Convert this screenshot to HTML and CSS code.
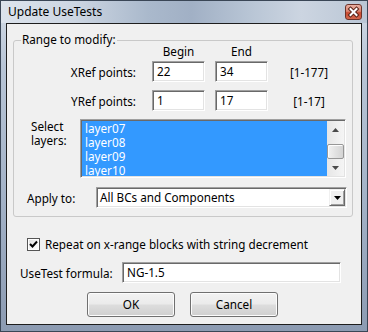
FILE: index.html
```html
<!DOCTYPE html>
<html>
<head>
<meta charset="utf-8">
<link rel="stylesheet" href="styles.css">
</head>
<body>
<div class="window">
  <div class="titlebar">
    <span class="title">Update UseTests</span>
    <div class="close">
      <svg width="15" height="14" viewBox="0 0 15 14">
        <path d="M4.5 4 L10.5 10 M10.5 4 L4.5 10" stroke="#5a2318" stroke-width="4" stroke-linecap="square"/>
        <path d="M4.5 4 L10.5 10 M10.5 4 L4.5 10" stroke="#ffffff" stroke-width="2" stroke-linecap="square"/>
      </svg>
    </div>
  </div>
  <div class="client">
    <fieldset class="group">
      <legend>Range to modify:</legend>
      <div class="row hdr-row">
        <div class="rlabel"></div>
        <div class="hdr">Begin</div>
        <div class="hdr">End</div>
      </div>
      <div class="row edit-row first">
        <div class="rlabel">XRef points:</div>
        <div class="edit">22</div>
        <div class="edit">34</div>
        <div class="range">[1-177]</div>
      </div>
      <div class="row edit-row">
        <div class="rlabel">YRef points:</div>
        <div class="edit">1</div>
        <div class="edit">17</div>
        <div class="range">[1-17]</div>
      </div>
      <div class="layers-row">
        <div class="layers-label">Select<br>layers:</div>
        <div class="listbox">
          <div class="items">
            <div class="item">layer07</div>
            <div class="item">layer08</div>
            <div class="item">layer09</div>
            <div class="item">layer10</div>
          </div>
          <div class="vscroll">
            <div class="sarrow">
              <svg width="7" height="4" viewBox="0 0 7 4"><polygon points="0,4 7,4 3.5,0" fill="#4a4a4a"/></svg>
            </div>
            <div class="track"><div class="thumb"></div></div>
            <div class="sarrow">
              <svg width="7" height="4" viewBox="0 0 7 4"><polygon points="0,0 7,0 3.5,4" fill="#4a4a4a"/></svg>
            </div>
          </div>
        </div>
      </div>
      <div class="apply-row">
        <div class="apply-label">Apply to:</div>
        <div class="combo">
          <div class="combo-text">All BCs and Components</div>
          <div class="combo-btn">
            <svg width="7" height="4" viewBox="0 0 7 4"><polygon points="0,0 7,0 3.5,4" fill="#000"/></svg>
          </div>
        </div>
      </div>
    </fieldset>
    <div class="check-row">
      <div class="checkbox">
        <svg width="11" height="11" viewBox="0 0 11 11"><path d="M2 5 L4.5 7.5 L9 2.5" stroke="#000" stroke-width="2" fill="none"/></svg>
      </div>
      <span class="check-text">Repeat on x-range blocks with string decrement</span>
    </div>
    <div class="formula-row">
      <div class="formula-label">UseTest formula:</div>
      <div class="edit formula-edit">NG-1.5</div>
    </div>
    <div class="buttons">
      <div class="btn ok">OK</div>
      <div class="btn cancel">Cancel</div>
    </div>
  </div>
</div>
</body>
</html>
```
FILE: styles.css
```css
* { box-sizing: border-box; }
html, body { margin: 0; padding: 0; }
body {
  width: 368px;
  height: 332px;
  overflow: hidden;
  font-family: "Noto Sans", "Liberation Sans", Arial, sans-serif;
  font-size: 11.7px;
  color: #000;
  background: #fff;
}
.window {
  width: 368px;
  height: 332px;
  border: 1px solid #3a4656;
  background: linear-gradient(180deg, #d3dbe6 0%, #b8c5d6 20%, #a3b2c7 60%, #8c9bb2 100%);
  padding: 0 5px 6px 5px;
  display: flex;
  flex-direction: column;
}
.titlebar {
  height: 22px;
  margin: 0 -5px;
  padding: 3px 5px 0 7px;
  display: flex;
  justify-content: space-between;
  align-items: flex-start;
  background: linear-gradient(90deg, #dce3ec 0%, #cdd6e2 20%, #aab9cc 40%, #a1b0c5 52%, #b8c5d5 68%, #ccd5e1 82%, #bac6d5 100%);
}
.title {
  line-height: 16px;
  font-size: 12px;
  color: #000;
}
.close {
  width: 17px;
  height: 16px;
  border: 1px solid #6e3329;
  border-radius: 3px;
  background: linear-gradient(180deg, #eab0a3 0%, #dc8470 45%, #c94a30 55%, #d4674d 100%);
  display: flex;
  align-items: center;
  justify-content: center;
}
.client {
  flex: 1;
  border: 1px solid #1e1e1e;
  background: #f0f0f0;
  display: flex;
  flex-direction: column;
}
.group {
  margin: 8px 8px 0 6px;
  padding: 0 0 8px 0;
  border: 1px solid #c9c9c9;
  border-radius: 3px;
  min-width: 0;
}
.group legend {
  margin-left: 7px;
  padding: 0 1px 2px 1px;
  line-height: 14px;
}
.row {
  display: flex;
  align-items: center;
}
.hdr-row {
  margin-top: -4px;
  height: 15px;
  line-height: 15px;
}
.rlabel {
  width: 138px;
  padding-right: 16px;
  text-align: right;
}
.hdr {
  width: 53px;
  margin-right: 10px;
  text-align: center;
}
.edit-row {
  height: 21px;
  margin-top: 8px;
}
.edit-row.first {
  margin-top: 2px;
}
.edit {
  width: 53px;
  height: 21px;
  margin-right: 10px;
  background: #fff;
  border: 1px solid;
  border-color: #a0a0a0 #fff #fff #a0a0a0;
  box-shadow: inset 1px 1px 0 #696969, inset -1px -1px 0 #e3e3e3;
  padding: 0 4px;
  line-height: 19px;
}
.edit-row .edit:nth-child(3) { margin-right: 0; }
.range {
  width: 82px;
  text-align: center;
}
.layers-row {
  display: flex;
  margin-top: 8px;
}
.layers-label {
  width: 49px;
  margin-left: 17px;
  margin-top: 0;
  line-height: 14px;
}
.listbox {
  width: 266px;
  height: 59px;
  display: flex;
  background: #fff;
  border: 1px solid;
  border-color: #a0a0a0 #fff #fff #a0a0a0;
  box-shadow: inset 1px 1px 0 #696969, inset -1px -1px 0 #e3e3e3;
  padding: 1px;
}
.items {
  flex: 1;
  background: #3399ff;
  color: #fff;
  padding: 0 0 0 3px;
  overflow: hidden;
}
.item {
  line-height: 14px;
  height: 14px;
}
.vscroll {
  width: 17px;
  display: flex;
  flex-direction: column;
  background: linear-gradient(90deg, #e6e6e6, #f5f5f5);
}
.sarrow {
  height: 17px;
  display: flex;
  align-items: center;
  justify-content: center;
}
.track {
  flex: 1;
  padding-top: 6px;
  display: flex;
  flex-direction: column;
  justify-content: flex-start;
}
.thumb {
  height: 15px;
  border: 1px solid #979797;
  border-radius: 2px;
  background: linear-gradient(90deg, #f2f2f2 0%, #e2e2e2 50%, #d4d4d4 100%);
  box-shadow: inset 1px 1px 0 #fdfdfd;
}
.apply-row {
  display: flex;
  align-items: center;
  margin-top: 9px;
}
.apply-label {
  width: 69px;
  margin-left: 13px;
}
.combo {
  width: 251px;
  height: 21px;
  display: flex;
  align-items: stretch;
  background: #fff;
  border: 1px solid;
  border-color: #a0a0a0 #fff #fff #a0a0a0;
  box-shadow: inset 1px 1px 0 #696969, inset -1px -1px 0 #e3e3e3;
  padding: 1px;
}
.combo-text {
  flex: 1;
  padding-left: 2px;
  line-height: 17px;
}
.combo-btn {
  width: 16px;
  display: flex;
  align-items: center;
  justify-content: center;
  background: #f0f0f0;
  border: 1px solid;
  border-color: #f0f0f0 #696969 #696969 #f0f0f0;
  box-shadow: inset 1px 1px 0 #fff, inset -1px -1px 0 #a0a0a0;
}
.check-row {
  display: flex;
  align-items: center;
  height: 13px;
  margin-top: 21px;
  margin-left: 20px;
}
.checkbox {
  width: 13px;
  height: 13px;
  border: 1px solid #555;
  background: linear-gradient(135deg, #dcdcdc 0%, #f6f6f6 60%, #fff 100%);
  box-shadow: inset 0 0 0 1px #fff;
  display: flex;
  align-items: center;
  justify-content: center;
}
.check-text {
  margin-left: 5px;
  line-height: 13px;
}
.formula-row {
  display: flex;
  align-items: center;
  margin-top: 11px;
  margin-left: 13px;
}
.formula-label {
  width: 102px;
}
.formula-edit {
  width: 219px;
  margin-right: 0;
  padding-left: 4px;
}
.buttons {
  display: flex;
  margin-top: 9px;
  margin-left: 80px;
}
.btn {
  width: 88px;
  height: 25px;
  border: 1px solid #707070;
  border-radius: 3px;
  background: linear-gradient(180deg, #f2f2f2 0%, #ebebeb 48%, #dddddd 52%, #cfcfcf 100%);
  box-shadow: inset 0 0 0 1px #fcfcfc;
  text-align: center;
  line-height: 23px;
}
.cancel { margin-left: 15px; }
```
